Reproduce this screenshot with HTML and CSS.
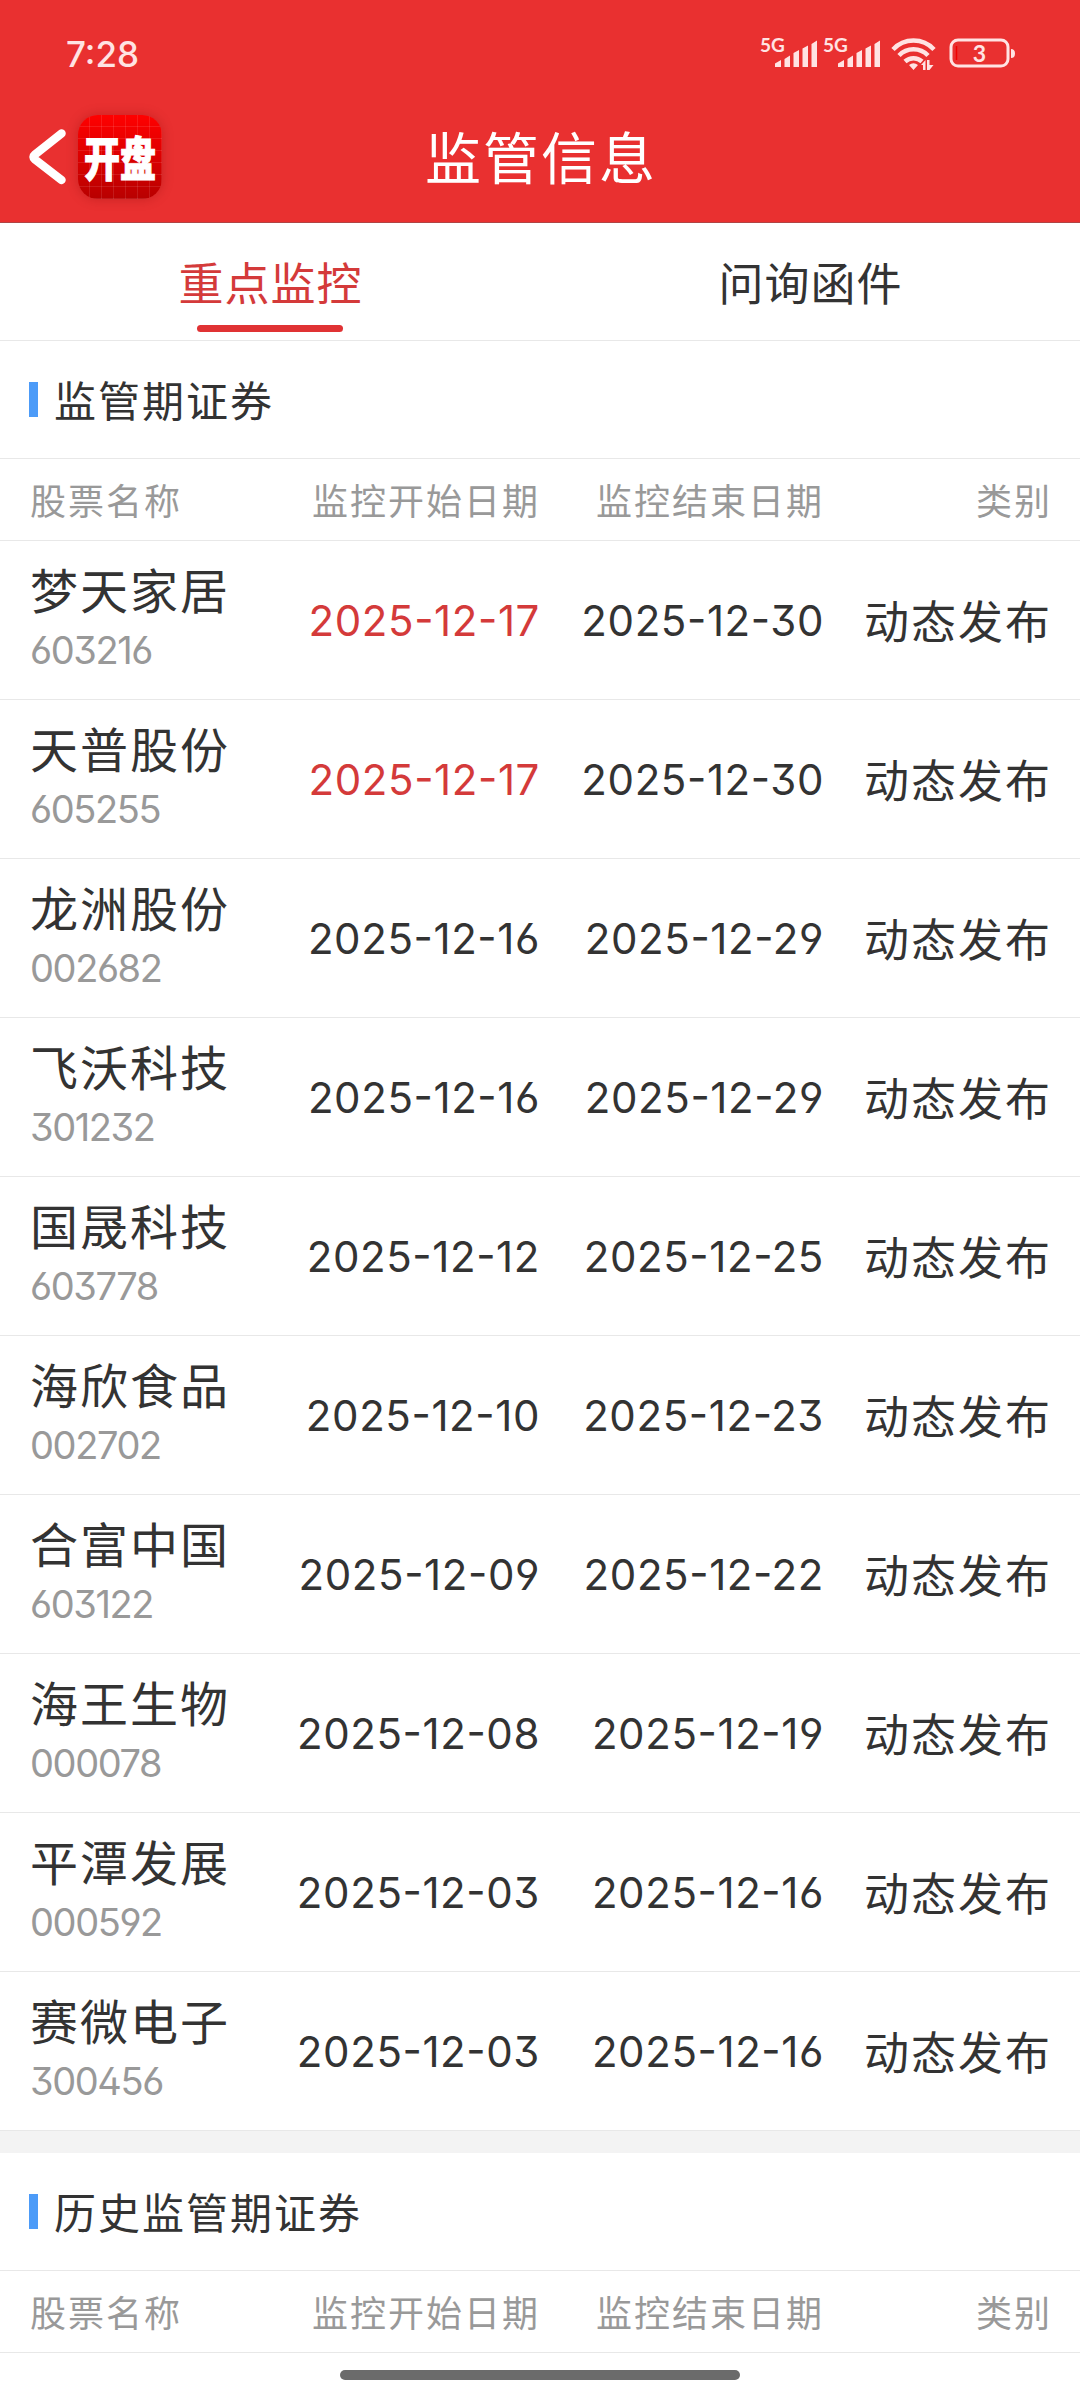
FILE: index.html
```html
<!DOCTYPE html>
<html lang="zh-CN">
<head>
    <meta charset="UTF-8">
    <title>监管信息</title>
    <link rel="stylesheet" href="styles.css">
</head>
<body>
<header class="header">
    <div class="status-bar">
        <span class="time">7:28</span>
        <svg class="status-icons" width="260" height="40" viewBox="0 0 260 40" fill="#ffe3e3">
            <text x="0" y="17.500" class="net">5G</text>
            <path d="M15 33v-3.500l6-3.500v7zM24.500 33v-8l5.500-3.500v11.500zM33.500 33V19l5.500-3v17zM42.500 33V14.500l5.500-3v21.500zM51.500 33V10l5.500-3.500v26.500z"/>
            <text x="63" y="17.500" class="net">5G</text>
            <path d="M78 33v-3.500l6-3.500v7zM87.500 33v-8l5.500-3.500v11.500zM96.500 33V19l5.500-3v17zM105.500 33V14.500l5.500-3v21.500zM114.500 33V10l5.500-3.500v26.500z"/>
            <g fill="none" stroke="#ffe3e3" stroke-width="4.500">
                <path d="M133 15.500a28 28 0 0 1 41 0M139 21.500a20 20 0 0 1 29 0M145 27.500a12.500 12.500 0 0 1 17 0"/>
            </g>
            <path d="M149 31q4.500-3.500 9 0l-4.500 5zM161 31l4.500-5v10h-2.500v-5zM167 26h2.500v5h4l-4 5h-2.500z"/>
            <rect x="191" y="6" width="57" height="26" rx="7" fill="none" stroke="#ffe3e3" stroke-width="3"/>
            <path d="M251 15q4 0 4 4.500t-4 4.500z"/>
            <path d="M196.500 12v14" stroke="#f00000" stroke-width="1.500"/>
            <text x="219.500" y="28" class="level">3</text>
        </svg>
    </div>
    <div class="nav">
        <svg class="back" width="38" height="56" viewBox="0 0 38 56">
            <path d="M33.500 4.500L7 25.500q-3 2.500 0 5L33.500 51" fill="none" stroke="#fff" stroke-width="8.500" stroke-linecap="round" stroke-linejoin="round"/>
        </svg>
        <div class="logo"><span>开盘</span></div>
        <h1>监管信息</h1>
    </div>
</header>
<nav class="tabs">
    <div class="tab active"><span>重点监控</span></div>
    <div class="tab"><span>问询函件</span></div>
</nav>
<section>
    <h2>监管期证券</h2>
    <div class="row head">
        <span>股票名称</span><span>监控开始日期</span><span>监控结束日期</span><span>类别</span>
    </div>
    <div class="row">
        <div class="stock"><b>梦天家居</b><i>603216</i></div>
        <span class="date new">2025-12-17</span><span class="date">2025-12-30</span><span class="type">动态发布</span>
    </div>
    <div class="row">
        <div class="stock"><b>天普股份</b><i>605255</i></div>
        <span class="date new">2025-12-17</span><span class="date">2025-12-30</span><span class="type">动态发布</span>
    </div>
    <div class="row">
        <div class="stock"><b>龙洲股份</b><i>002682</i></div>
        <span class="date">2025-12-16</span><span class="date">2025-12-29</span><span class="type">动态发布</span>
    </div>
    <div class="row">
        <div class="stock"><b>飞沃科技</b><i>301232</i></div>
        <span class="date">2025-12-16</span><span class="date">2025-12-29</span><span class="type">动态发布</span>
    </div>
    <div class="row">
        <div class="stock"><b>国晟科技</b><i>603778</i></div>
        <span class="date">2025-12-12</span><span class="date">2025-12-25</span><span class="type">动态发布</span>
    </div>
    <div class="row">
        <div class="stock"><b>海欣食品</b><i>002702</i></div>
        <span class="date">2025-12-10</span><span class="date">2025-12-23</span><span class="type">动态发布</span>
    </div>
    <div class="row">
        <div class="stock"><b>合富中国</b><i>603122</i></div>
        <span class="date">2025-12-09</span><span class="date">2025-12-22</span><span class="type">动态发布</span>
    </div>
    <div class="row">
        <div class="stock"><b>海王生物</b><i>000078</i></div>
        <span class="date">2025-12-08</span><span class="date">2025-12-19</span><span class="type">动态发布</span>
    </div>
    <div class="row">
        <div class="stock"><b>平潭发展</b><i>000592</i></div>
        <span class="date">2025-12-03</span><span class="date">2025-12-16</span><span class="type">动态发布</span>
    </div>
    <div class="row">
        <div class="stock"><b>赛微电子</b><i>300456</i></div>
        <span class="date">2025-12-03</span><span class="date">2025-12-16</span><span class="type">动态发布</span>
    </div>
</section>
<section class="history">
    <h2>历史监管期证券</h2>
    <div class="row head">
        <span>股票名称</span><span>监控开始日期</span><span>监控结束日期</span><span>类别</span>
    </div>
</section>
<div class="home-bar"></div>
</body>
</html>
```

FILE: styles.css
```css
* {
    box-sizing: border-box;
}

body {
    margin: 0;
    height: 2400px;
    overflow: hidden;
    background: #fff;
    color: #333;
    font-family: Inter, "Noto Sans CJK SC", sans-serif;
}

h1, h2 {
    margin: 0;
    font-weight: 400;
}

.header {
    height: 223px;
    background: #e93030;
    color: #fff;
    border-bottom: 1px solid #b04444;
}

.status-bar {
    display: flex;
    justify-content: space-between;
    height: 95px;
    padding: 34px 60px 0 66px;
}

.time {
    color: #ffe3e3;
    font-size: 35px;
    font-weight: 500;
    line-height: 40px;
}

.net {
    font: 700 19px Lato, sans-serif;
}

.level {
    font: 700 23px Lato, sans-serif;
    text-anchor: middle;
}

.nav {
    display: grid;
    grid-template-columns: 38px 84px 1fr 160px;
    column-gap: 12px;
    align-items: center;
    height: 124px;
    padding-left: 28px;
}

.nav h1 {
    padding-bottom: 5px;
    font-size: 56px;
    letter-spacing: 2px;
    text-align: center;
}

/* 应用图标：红色渐变 + 网格线 */
.logo {
    display: flex;
    align-items: center;
    justify-content: center;
    height: 84px;
    padding-bottom: 4px;
    border-radius: 20px;
    background: repeating-linear-gradient(90deg, transparent 0 11px, rgba(255, 255, 255, .1) 11px 12px),
    repeating-linear-gradient(transparent 0 11px, rgba(255, 255, 255, .1) 11px 12px),
    linear-gradient(#f00, #b80000);
    box-shadow: 0 0 12px rgba(120, 0, 0, .3);
}

.logo span {
    font-size: 36px;
    font-weight: 900;
    -webkit-text-stroke: .8px #fff;
    transform: scaleY(1.3);
}

.tabs {
    display: flex;
    height: 118px;
    border-bottom: 1px solid #e8e8e8;
}

.tab {
    flex: 1;
    display: flex;
    flex-direction: column;
    align-items: center;
    padding: 27px 0 0 1px;
    font-size: 45px;
    line-height: 70px;
    letter-spacing: 1px;
}

.active {
    color: #d43a3a;
}

.active:after {
    content: "";
    width: 146px;
    height: 7px;
    margin: 5px 2px 0 0;
    border-radius: 4px;
    background: #e03234;
}

h2 {
    display: flex;
    align-items: center;
    gap: 16px;
    height: 118px;
    padding: 0 0 2px 29px;
    border-bottom: 1px solid #e8e8e8;
    font-size: 42px;
    letter-spacing: 2px;
}

h2:before {
    content: "";
    width: 9px;
    height: 35px;
    margin-top: 2px;
    background: #4c9bf8;
}

.row {
    display: grid;
    grid-template-columns: 230px 280px 284px 228px;
    align-items: center;
    height: 159px;
    padding-left: 30px;
    border-bottom: 1px solid #e8e8e8;
}

.row > span {
    text-align: right;
}

.head {
    height: 82px;
    padding-bottom: 2px;
    color: #999;
    font-size: 36px;
    letter-spacing: 2px;
}

.row.head > span:first-child {
    text-align: left;
}

.stock {
    padding-bottom: 4px;
}

.stock b {
    display: block;
    font-size: 48px;
    font-weight: 400;
    letter-spacing: 2px;
    line-height: 64px;
}

.stock i {
    display: block;
    color: #999;
    font-size: 38px;
    font-style: normal;
    font-feature-settings: "ss01";
    letter-spacing: -1.4px;
    line-height: 52px;
}

.date {
    padding-top: 1px;
    font-size: 42px;
    font-feature-settings: "case", "ss01";
    letter-spacing: .6px;
}

.new {
    color: #d43a3a;
}

.type {
    padding-bottom: 2px;
    font-size: 45px;
    letter-spacing: 2px;
}

.history {
    border-top: 22px solid #f3f3f3;
}

.home-bar {
    width: 400px;
    height: 10px;
    margin: 17px auto 0;
    border-radius: 5px;
    background: #6b6b6b;
}
```
